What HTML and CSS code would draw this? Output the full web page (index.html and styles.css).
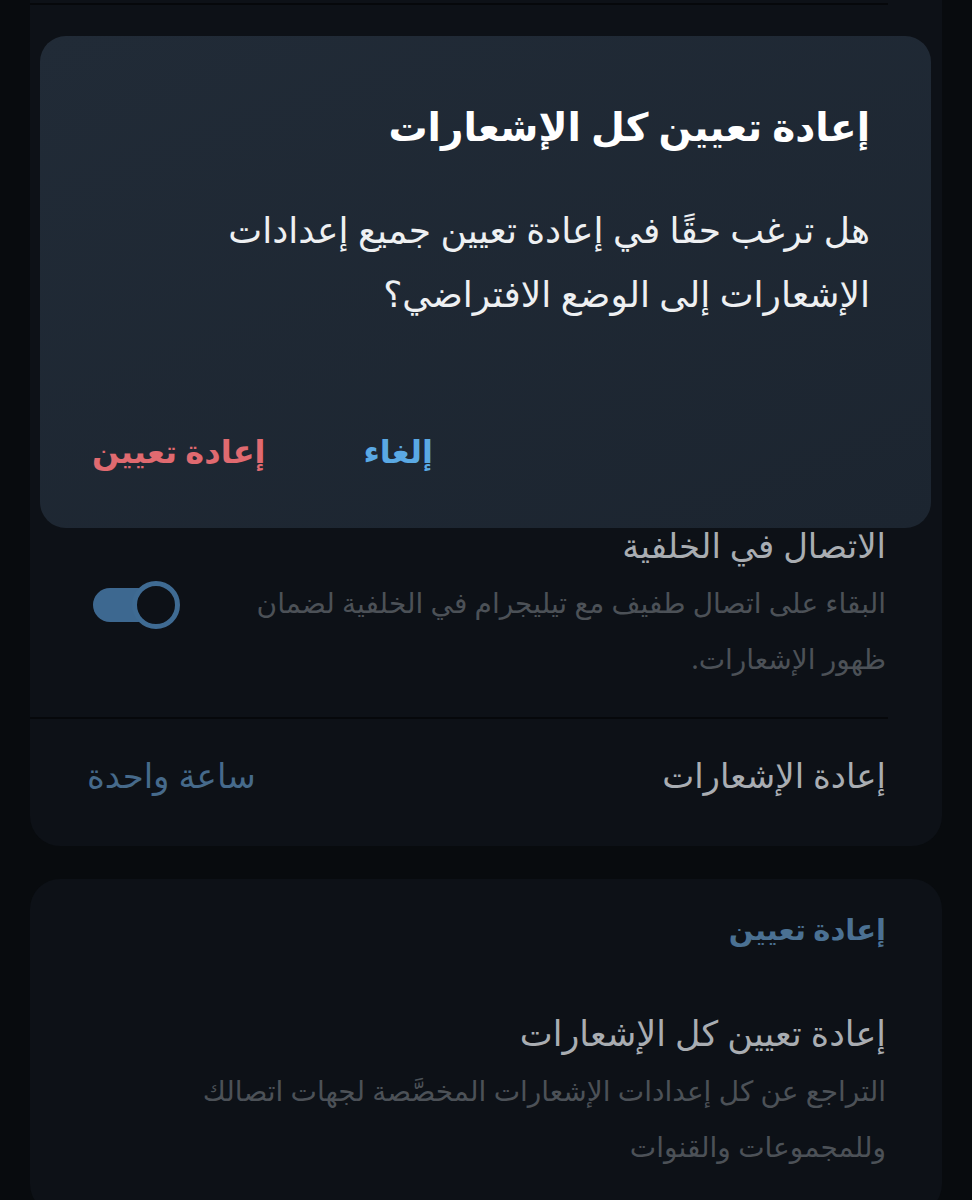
FILE: index.html
```html
<!DOCTYPE html>
<html lang="ar" dir="rtl">
<head>
  <meta charset="UTF-8">
  <meta name="viewport" content="width=device-width, initial-scale=1.0">
  <title>الإشعارات والأصوات</title>
  <link rel="stylesheet" href="styles.css">
</head>
<body>
  <main class="settings">
    <section class="card card-other">
      <div class="row-cut"></div>
      <div class="row row-hidden"></div>

      <div class="row row-toggle">
        <div class="row-text">
          <div class="row-title">الاتصال في الخلفية</div>
          <div class="row-desc">البقاء على اتصال طفيف مع تيليجرام في الخلفية لضمان<br>ظهور الإشعارات.</div>
        </div>
        <span class="switch is-on"></span>
      </div>

      <div class="row row-value">
        <div class="row-title">إعادة الإشعارات</div>
        <div class="value">ساعة واحدة</div>
      </div>
    </section>

    <section class="card card-reset">
      <h2 class="card-header">إعادة تعيين</h2>
      <div class="row row-plain">
        <div class="row-title">إعادة تعيين كل الإشعارات</div>
        <div class="row-desc">التراجع عن كل إعدادات الإشعارات المخصَّصة لجهات اتصالك<br>وللمجموعات والقنوات</div>
      </div>
    </section>
  </main>

  <div class="dialog">
    <h1 class="dialog-title">إعادة تعيين كل الإشعارات</h1>
    <p class="dialog-text">هل ترغب حقًا في إعادة تعيين جميع إعدادات<br>الإشعارات إلى الوضع الافتراضي؟</p>
    <div class="dialog-buttons">
      <button class="btn btn-cancel">إلغاء</button>
      <button class="btn btn-reset">إعادة تعيين</button>
    </div>
  </div>
</body>
</html>
```

FILE: styles.css
```css
*,
*::before,
*::after {
  box-sizing: border-box;
  margin: 0;
  padding: 0;
}

body {
  background-color: #080b0e;
  color: #fff;
  font-family: "Noto Sans", "DejaVu Sans", sans-serif;
  overflow: hidden;
  height: 1200px;
}

.settings {
  padding: 0 30px;
}

.card {
  background: #0d1117;
  border-radius: 30px;
}

.card-other {
  margin-top: -40px;
}

.row-cut {
  height: 45px;
  border-bottom: 2px solid #06080b;
  margin-right: 54px;
}

.row-hidden {
  height: 518px;
}

.row {
  padding: 0 56px 0 62px;
}

.row-title {
  font-size: 34px;
  line-height: 44px;
  color: #a9adb2;
}

.row-desc {
  margin-top: 7px;
  font-size: 28px;
  line-height: 56px;
  color: #4c5157;
}

.row-toggle {
  display: flex;
  align-items: flex-start;
  justify-content: space-between;
  padding-bottom: 33px;
  position: relative;
}

.row-toggle::after {
  content: "";
  position: absolute;
  bottom: 0;
  left: 0;
  right: 54px;
  border-bottom: 2px solid #06080b;
}

.switch {
  position: relative;
  flex: none;
  width: 88px;
  height: 48px;
  margin-top: 58px;
}

.switch::before {
  content: "";
  position: absolute;
  left: 1px;
  top: 7px;
  width: 62px;
  height: 34px;
  border-radius: 17px;
  background: #3d6890;
}

.switch::after {
  content: "";
  position: absolute;
  left: 40px;
  top: 0;
  width: 48px;
  height: 48px;
  border-radius: 50%;
  background: #0d1117;
  border: 5px solid #3f6b93;
}

.row-value {
  display: flex;
  justify-content: space-between;
  align-items: center;
  height: 127px;
  padding-left: 57px;
  padding-bottom: 16px;
}

.value {
  font-size: 34px;
  color: #466a8b;
}

.card-reset {
  margin-top: 33px;
  padding-bottom: 40px;
  min-height: 330px;
}

.card-header {
  padding: 28px 56px 0 0;
  font-size: 29px;
  line-height: 44px;
  font-weight: bold;
  color: #4b7193;
}

.row-plain {
  padding-top: 60px;
}

.row-plain .row-title {
  font-size: 35px;
}

/* dialog floats over the list */
.dialog {
  position: absolute;
  top: 36px;
  left: 40px;
  width: 891px;
  height: 492px;
  background: linear-gradient(160deg, #212b37, #1c2530);
  border-radius: 26px;
  padding: 58px 61px 0 40px;
}

.dialog-title {
  font-size: 39px;
  line-height: 64px;
  font-weight: bold;
  color: #fff;
}

.dialog-text {
  margin-top: 40px;
  font-size: 36px;
  line-height: 64px;
  color: #eef0f2;
}

.dialog-buttons {
  display: flex;
  justify-content: flex-end;
  gap: 98px;
  margin-top: 100px;
  padding-left: 12px;
}

.btn {
  background: none;
  border: none;
  font-family: inherit;
  font-size: 32px;
  font-weight: bold;
  line-height: 50px;
  cursor: pointer;
}

.btn-cancel {
  color: #5aa9e4;
}

.btn-reset {
  color: #e06a70;
}
```
